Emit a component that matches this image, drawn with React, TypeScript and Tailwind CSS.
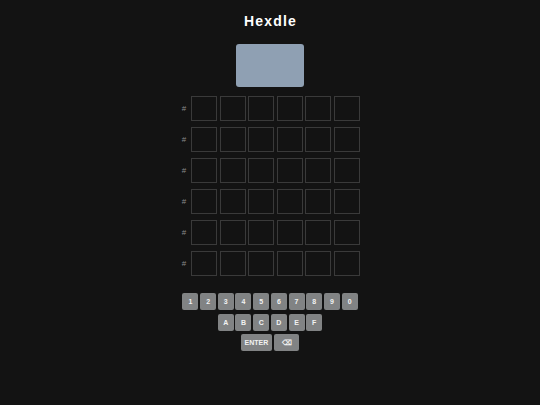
import React from "react";

const ROWS = 6;
const COLS = 6;
const DIGITS = ["1", "2", "3", "4", "5", "6", "7", "8", "9", "0"];
const LETTERS = ["A", "B", "C", "D", "E", "F"];

function Key({ label, wide }: { label: string; wide?: "enter" | "back" }) {
  const w = wide === "enter" ? "w-[31px]" : wide === "back" ? "w-[25px]" : "w-[16px]";
  return (
    <div
      className={`${w} h-[17px] rounded-[2px] bg-[#818384] text-[#f2f2f2] text-[7px] font-bold flex items-center justify-center leading-none`}
    >
      {label}
    </div>
  );
}

export default function App() {
  return (
    <div
      className="w-[540px] h-[405px] bg-[#131313] flex flex-col items-center"
      style={{ fontFamily: '"Liberation Sans", Arial, sans-serif' }}
    >
      <h1 className="mt-[11px] h-[20px] leading-[20px] text-[14px] font-bold tracking-[1.2px] text-white pl-[1px]">
        Hexdle
      </h1>

      <div className="mt-[13px] w-[68px] h-[43px] rounded-[3px] bg-[#8fa0b3]" />

      <div className="mt-[9px] flex flex-col gap-[6px]">
        {Array.from({ length: ROWS }).map((_, r) => (
          <div key={r} className="flex items-center gap-[3px]">
            <div className="w-[8px] text-center text-[8px] text-[#8a8a8a] leading-none">#</div>
            <div className="flex gap-[2.6px]">
              {Array.from({ length: COLS }).map((_, c) => (
                <div key={c} className="w-[26px] h-[25px] border border-[#3a3a3a]" />
              ))}
            </div>
          </div>
        ))}
      </div>

      <div className="mt-[17px] flex flex-col items-center gap-[3.5px]">
        <div className="flex gap-[1.7px]">
          {DIGITS.map((d) => (
            <Key key={d} label={d} />
          ))}
        </div>
        <div className="flex gap-[1.7px]">
          {LETTERS.map((l) => (
            <Key key={l} label={l} />
          ))}
        </div>
        <div className="flex gap-[2.3px]">
          <Key label="ENTER" wide="enter" />
          <Key label="⌫" wide="back" />
        </div>
      </div>
    </div>
  );
}
